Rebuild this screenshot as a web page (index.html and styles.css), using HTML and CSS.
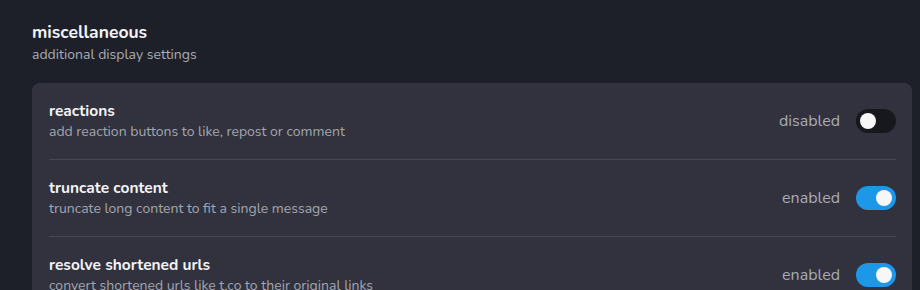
FILE: index.html
```html
<!DOCTYPE html>
<html lang="en">
<head>
  <meta charset="UTF-8">
  <meta name="viewport" content="width=device-width, initial-scale=1.0">
  <title>Settings - Miscellaneous</title>
  <link rel="stylesheet" href="styles.css">
</head>
<body>
  <div class="section">
    <!-- Section header -->
    <div class="section-head">
      <h2>miscellaneous</h2>
      <p>additional display settings</p>
    </div>

    <!-- Settings card -->
    <div class="card">
      <div class="setting">
        <div class="setting-text">
          <h3>reactions</h3>
          <p>add reaction buttons to like, repost or comment</p>
        </div>
        <div class="setting-control">
          <span class="state">disabled</span>
          <span class="toggle"></span>
        </div>
      </div>

      <div class="setting">
        <div class="setting-text">
          <h3>truncate content</h3>
          <p>truncate long content to fit a single message</p>
        </div>
        <div class="setting-control">
          <span class="state">enabled</span>
          <span class="toggle on"></span>
        </div>
      </div>

      <div class="setting">
        <div class="setting-text">
          <h3>resolve shortened urls</h3>
          <p>convert shortened urls like t.co to their original links</p>
        </div>
        <div class="setting-control">
          <span class="state">enabled</span>
          <span class="toggle on"></span>
        </div>
      </div>
    </div>
  </div>
</body>
</html>
```

FILE: styles.css
```css
/* General Reset */
* {
  margin: 0;
  padding: 0;
  box-sizing: border-box;
  font-family: Nunito, Lato, "Noto Sans", sans-serif;
}

body {
  background-color: #1e2029;
  color: #f4f4f6;
}

.section {
  padding: 22px 8px 0 32px;
}

/* Section header */
.section-head h2 {
  font-size: 17.5px;
  line-height: 20px;
  font-weight: 700;
}

.section-head p {
  font-size: 14px;
  line-height: 18px;
  color: #a9abb4;
  margin-top: 4px;
}

/* Card */
.card {
  background-color: #31323e;
  border-radius: 8px;
  margin-top: 19px;
  padding: 0 16px 0 17px;
}

.setting {
  display: flex;
  justify-content: space-between;
  align-items: center;
  padding: 18px 0;
  border-bottom: 1px solid #474855;
}

.setting:last-child {
  border-bottom: none;
}

.setting-text h3 {
  font-size: 15.5px;
  line-height: 20px;
  font-weight: 700;
}

.setting-text p {
  font-size: 14px;
  line-height: 18px;
  color: #a3a5ae;
  margin-top: 2px;
}

.setting-control {
  display: flex;
  align-items: center;
  gap: 16px;
}

.state {
  font-size: 16px;
  color: #a9abb4;
}

/* Toggle switch */
.toggle {
  position: relative;
  width: 40px;
  height: 24px;
  border-radius: 12px;
  background-color: #17181e;
}

.toggle::after {
  content: "";
  position: absolute;
  top: 4px;
  left: 4px;
  width: 16px;
  height: 16px;
  border-radius: 50%;
  background-color: #f7f7f8;
}

.toggle.on {
  background-color: #1d97e8;
}

.toggle.on::after {
  left: 20px;
}
```
